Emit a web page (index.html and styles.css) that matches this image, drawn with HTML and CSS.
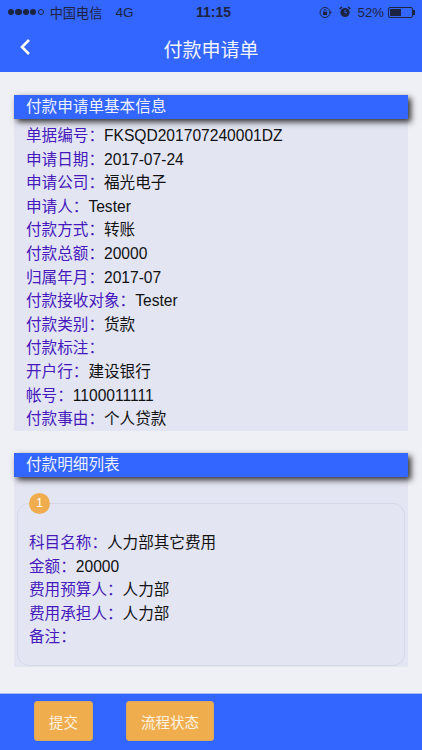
FILE: index.html
```html
<!DOCTYPE html>
<html lang="zh-CN">
<head>
    <meta charset="UTF-8">
    <meta name="viewport" content="width=device-width, initial-scale=1.0">
    <title>付款申请单</title>
    <link rel="stylesheet" href="styles.css">
</head>
<body>
    <div id="header">
        <div class="statusbar">
            <div class="status-left">
                <span class="dots"><i></i><i></i><i></i><i></i><i class="empty"></i></span>
                <span>中国电信</span>
                <span class="net">4G</span>
            </div>
            <div class="status-time">11:15</div>
            <div class="status-right">
                <svg class="st-icon" viewBox="0 0 13 13" width="13" height="13">
                    <circle cx="6" cy="6.5" r="5" fill="none" stroke="#1c2340" stroke-width="1"/>
                    <rect x="4" y="5.8" width="4" height="3.2" fill="#1c2340"/>
                    <path d="M4.8 5.8V4.7a1.2 1.2 0 0 1 2.4 0v1.1" fill="none" stroke="#1c2340" stroke-width=".8"/>
                    <path d="M10 5.8h3l-1.5 2z" fill="#1c2340"/>
                </svg>
                <svg class="st-icon alarm" viewBox="0 0 12 12" width="12" height="12">
                    <circle cx="6" cy="6.5" r="4.6" fill="#1c2340"/>
                    <path d="M6 4v2.8h2" fill="none" stroke="#3366ff" stroke-width="1"/>
                    <path d="M.6 3 3 .9M11.4 3 9 .9" stroke="#1c2340" stroke-width="1.4"/>
                </svg>
                <span>52%</span>
                <span class="battery"><span class="level"></span></span>
            </div>
        </div>
        <div class="navbar">
            <svg class="back" viewBox="0 0 12 18" width="12" height="18">
                <path d="M10 2 3 9l7 7" fill="none" stroke="#fff" stroke-width="2.6"/>
            </svg>
            <div class="nav-title">付款申请单</div>
        </div>
    </div>

    <div id="content">
        <div class="section first">
            <div class="section-title">付款申请单基本信息</div>
            <div class="info">
                <div class="row"><span class="lbl">单据编号：</span>FKSQD201707240001DZ</div>
                <div class="row"><span class="lbl">申请日期：</span>2017-07-24</div>
                <div class="row"><span class="lbl">申请公司：</span>福光电子</div>
                <div class="row"><span class="lbl">申请人：</span>Tester</div>
                <div class="row"><span class="lbl">付款方式：</span>转账</div>
                <div class="row"><span class="lbl">付款总额：</span>20000</div>
                <div class="row"><span class="lbl">归属年月：</span>2017-07</div>
                <div class="row"><span class="lbl">付款接收对象：</span>Tester</div>
                <div class="row"><span class="lbl">付款类别：</span>货款</div>
                <div class="row"><span class="lbl">付款标注：</span></div>
                <div class="row"><span class="lbl">开户行：</span>建设银行</div>
                <div class="row"><span class="lbl">帐号：</span>1100011111</div>
                <div class="row"><span class="lbl">付款事由：</span>个人贷款</div>
            </div>
        </div>

        <div class="section">
            <div class="section-title">付款明细列表</div>
            <div class="detail-wrap">
                <div class="card">
                    <div class="badge">1</div>
                    <div class="row"><span class="lbl">科目名称：</span>人力部其它费用</div>
                    <div class="row"><span class="lbl">金额：</span>20000</div>
                    <div class="row"><span class="lbl">费用预算人：</span>人力部</div>
                    <div class="row"><span class="lbl">费用承担人：</span>人力部</div>
                    <div class="row"><span class="lbl">备注：</span></div>
                </div>
            </div>
        </div>
    </div>

    <div id="footer">
        <button class="botao small">提交</button>
        <button class="botao wide">流程状态</button>
    </div>
</body>
</html>
```

FILE: styles.css
```css
*{
    box-sizing: border-box;
}

html,body{
    margin: 0;
    height: 100%;
}

body{
    width: 422px;
    height: 750px;
    display: flex;
    flex-direction: column;
    overflow: hidden;
    background: #efeff6;
    font-family: "Liberation Sans", "Noto Sans CJK SC", sans-serif;
    color: #111;
}

#header{
    height: 72px;
    background: #3366ff;
    flex: none;
}

.statusbar{
    height: 24px;
    padding: 0 7px 0 8px;
    display: flex;
    align-items: center;
    font-size: 13.2px;
    color: #1c2340;
}

.status-left{
    width: 188px;
    display: flex;
    align-items: center;
    gap: 6px;
}

.net{
    margin-left: 7px;
    font-size: 13.5px;
}

.dots{
    display: flex;
    gap: 1.2px;
}

.dots i{
    width: 6.2px;
    height: 6.2px;
    border-radius: 50%;
    background: #1c2340;
}

.dots i.empty{
    background: none;
    border: 1px solid #1c2340;
}

.status-time{
    font-weight: bold;
    font-size: 14px;
}

.status-right{
    flex: 1;
    display: flex;
    align-items: center;
    justify-content: flex-end;
    gap: 2px;
}

.st-icon{
    margin-right: 5px;
}

.battery{
    position: relative;
    width: 25px;
    height: 11px;
    border: 1px solid #1c2340;
    border-radius: 2px;
    padding: 1px;
    margin-left: 2px;
    margin-right: 2px;
}

.battery:after{
    content: "";
    position: absolute;
    right: -3px;
    top: 2px;
    width: 2px;
    height: 5px;
    background: #1c2340;
}

.level{
    display: block;
    width: 52%;
    height: 100%;
    background: #1c2340;
}

.navbar{
    height: 48px;
    position: relative;
    display: flex;
    align-items: center;
    justify-content: center;
}

.back{
    position: absolute;
    left: 19px;
    top: 14px;
}

.nav-title{
    font-size: 19px;
    color: #f2f4ff;
}

#content{
    flex: 1;
    padding: 23px 14px 0;
}

.section{
    margin-top: 22px;
}

.section.first{
    margin-top: 0;
}

.section-title{
    position: relative;
    height: 24px;
    line-height: 24px;
    padding-left: 12px;
    font-size: 15.6px;
    color: #eef1ff;
    background: #3366ff;
    box-shadow: 3px 3px 6px #333;
}

.info{
    background: #e3e5f3;
    padding: 5px 0 0 12px;
    height: 312px;
}

.row{
    height: 23.6px;
    line-height: 23.6px;
    font-size: 15.6px;
    white-space: nowrap;
}

.lbl{
    color: #4519bb;
}

.detail-wrap{
    background: #e3e5f3;
    padding: 26px 3px 0 3px;
    height: 190px;
}

.card{
    position: relative;
    height: 163px;
    padding: 27px 0 0 11px;
    border: 1px solid #d6d8e8;
    border-radius: 12px;
}

.badge{
    position: absolute;
    left: 11px;
    top: -11px;
    width: 21px;
    height: 21px;
    border-radius: 50%;
    background: #f0ad4e;
    color: #fff;
    text-align: center;
    font-size: 12px;
    line-height: 21px;
}

#footer{
    height: 57px;
    flex: none;
    background: #3366ff;
    border-top: 1px solid #a9bdf5;
    padding: 7px 0 0 34px;
    display: flex;
    align-items: flex-start;
    gap: 33px;
}

.botao{
    height: 40px;
    border: 1px solid #d8a860;
    border-radius: 3px;
    background: #f0ad4e;
    color: #fdf3e2;
    font-family: inherit;
    font-size: 14.5px;
    padding: 0;
}

.small{
    width: 59px;
}

.wide{
    width: 88px;
}
```
